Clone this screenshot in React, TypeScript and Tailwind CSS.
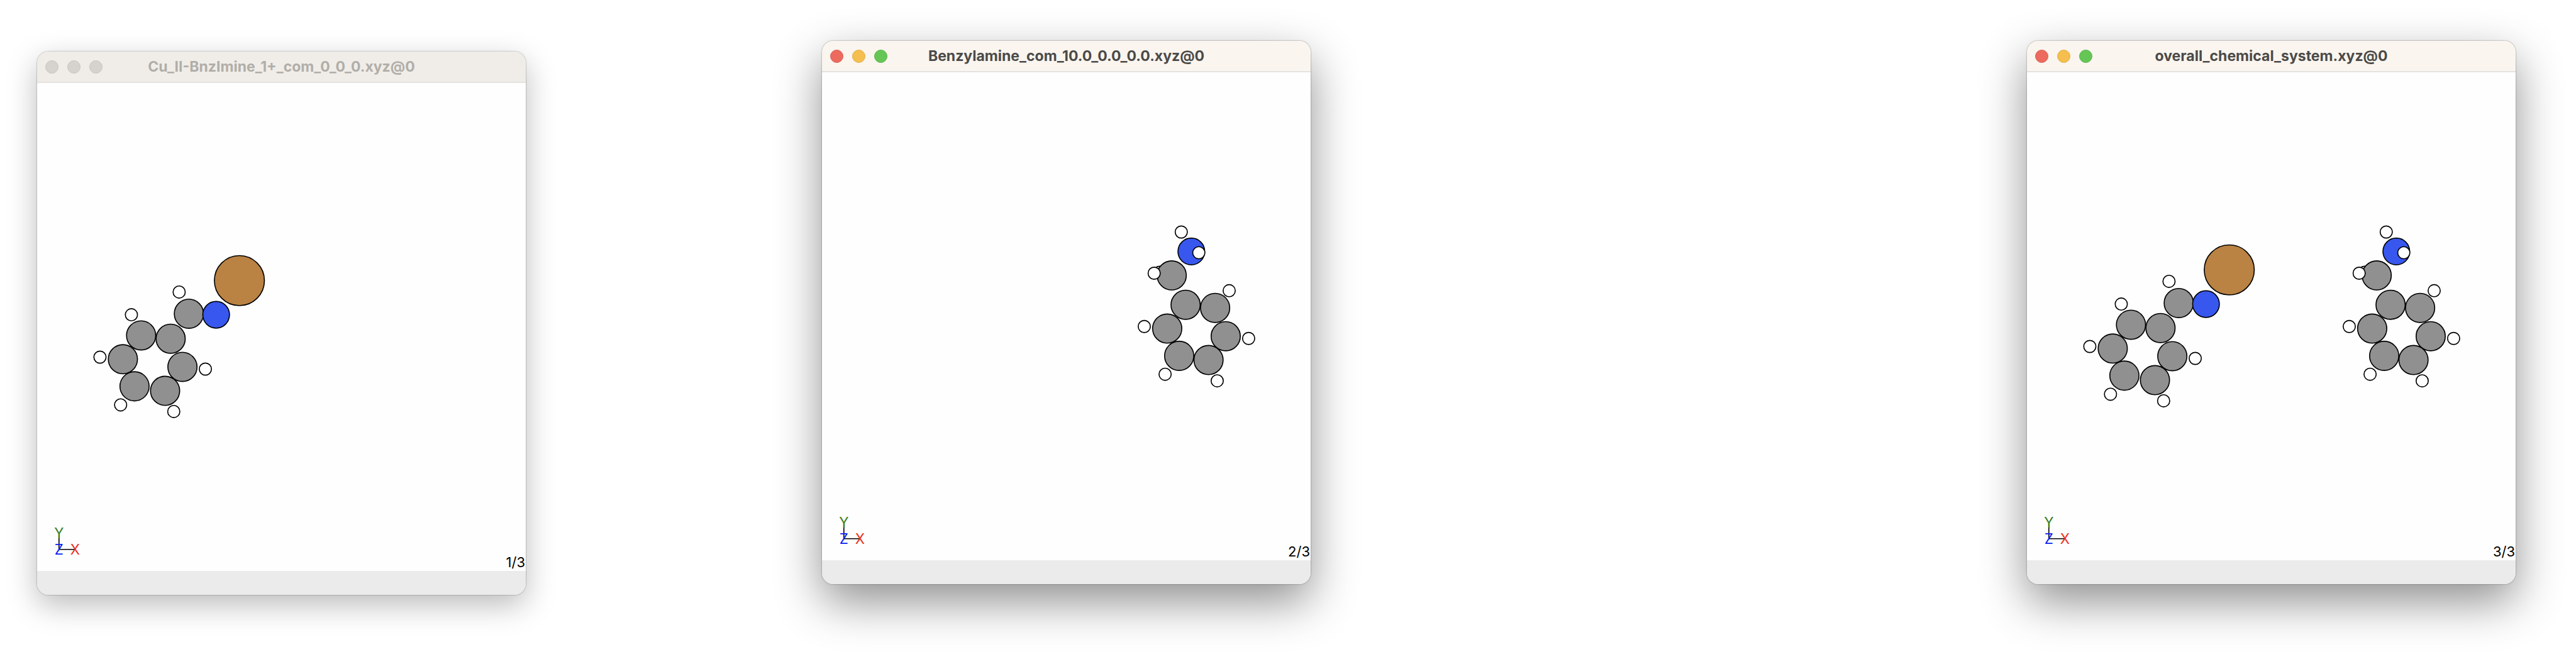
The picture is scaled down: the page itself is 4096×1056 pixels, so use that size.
import React from "react";

type Element = "H" | "C" | "N" | "Cu";
type Atom = [Element, number, number];

const ELEMENTS: Record<Element, { r: number; fill: string }> = {
  H: { r: 35, fill: "#ffffff" },
  C: { r: 84, fill: "#909090" },
  N: { r: 77, fill: "#3757ee" },
  Cu: { r: 144, fill: "#ba8243" },
};

// Atoms are listed back to front.
const COPPER_IMINE: Atom[] = [
  ["Cu", 928, 235],
  ["C", 637, 426],
  ["N", 794, 432],
  ["H", 581, 301],
  ["C", 362, 551],
  ["H", 306, 432],
  ["C", 532, 570],
  ["C", 257, 688],
  ["H", 125, 676],
  ["C", 600, 732],
  ["H", 732, 745],
  ["C", 324, 844],
  ["H", 244, 951],
  ["C", 500, 870],
  ["H", 550, 989],
];

const BENZYLAMINE: Atom[] = [
  ["H", 350, 137],
  ["N", 408, 249],
  ["H", 451, 256],
  ["H", 225, 369],
  ["C", 295, 387],
  ["H", 194, 374],
  ["C", 375, 556],
  ["H", 626, 475],
  ["C", 545, 574],
  ["C", 269, 693],
  ["H", 137, 681],
  ["C", 606, 737],
  ["H", 738, 750],
  ["C", 338, 850],
  ["H", 257, 956],
  ["C", 507, 874],
  ["H", 557, 994],
];

function Molecule({ atoms, x, y }: { atoms: Atom[]; x: number; y: number }) {
  return (
    <g transform={`translate(${x} ${y}) scale(0.33333)`} stroke="#000" strokeWidth="6">
      {atoms.map(([el, cx, cy], i) => (
        <circle key={i} cx={cx} cy={cy} r={ELEMENTS[el].r} fill={ELEMENTS[el].fill} />
      ))}
    </g>
  );
}

function Axes() {
  return (
    <g className="font-['Inter',sans-serif]" fontSize="27" textAnchor="middle">
      <path d="M42 866V895.5H73" fill="none" stroke="#000" strokeWidth="2" />
      <text x="42" y="874" fill="#3a7d22">Y</text>
      <text x="42" y="905" fill="#0a1df5">Z</text>
      <text x="73" y="905" fill="#ea3323">X</text>
    </g>
  );
}

function Light({ label, color }: { label: string; color: string }) {
  return <button type="button" aria-label={label} className={`size-[21px] rounded-full border ${color}`} />;
}

interface ViewerProps {
  title: string;
  counter: string;
  active?: boolean;
  className: string;
  children: React.ReactNode;
}

function Viewer({ title, counter, active = false, className, children }: ViewerProps) {
  const shadow = active
    ? "shadow-[0_0_2px_rgba(0,0,0,0.55),0_28px_72px_rgba(0,0,0,0.44)]"
    : "shadow-[0_0_2px_rgba(0,0,0,0.5),0_16px_48px_rgba(0,0,0,0.27)]";
  const bar = active ? "bg-[#faf5ef] text-[#4b4a48]" : "bg-[#f0ede8] text-[#b1aea9]";
  return (
    <section aria-label={title} className={`rounded-[18px] ${shadow} ${className}`}>
      <div className="overflow-hidden rounded-[18px]">
        <header
          className={`grid h-[50px] grid-cols-[1fr_auto_1fr] items-center border-b-2 border-[#e4e3df] px-[13px] ${bar}`}
        >
          <div className="flex gap-[14px]">
            <Light label="Close" color={active ? "border-[#dd5f54] bg-[#ec6a5e]" : "border-[#c6c3be] bg-[#d6d3ce]"} />
            <Light label="Minimize" color={active ? "border-[#e2ae45] bg-[#f4bf4f]" : "border-[#c6c3be] bg-[#d6d3ce]"} />
            <Light label="Zoom" color={active ? "border-[#58b34b] bg-[#65c655]" : "border-[#c6c3be] bg-[#d6d3ce]"} />
          </div>
          <h2 className="text-[23px] leading-none font-bold">{title}</h2>
        </header>
        <div className="relative bg-[#fefefe]">
          <svg viewBox="0 0 938 937" className="block w-full" role="img" aria-label={`Structure in ${title}`}>
            {children}
            <Axes />
          </svg>
          <span className="absolute right-px bottom-0 text-[22px] leading-7 text-black">{counter}</span>
        </div>
        <footer className="h-[38px] bg-[#ebebeb]" />
      </div>
    </section>
  );
}

export default function App() {
  return (
    <main className="grid min-h-screen grid-cols-[59fr_777fr_471fr_777fr_1139fr_777fr_96fr] items-start overflow-hidden bg-white pt-[65px] font-['Inter',sans-serif]">
      <Viewer title="Cu_II-BnzImine_1+_com_0_0_0.xyz@0" counter="1/3" className="col-start-2 mt-[17px]">
        <Molecule atoms={COPPER_IMINE} x={79} y={301} />
      </Viewer>
      <Viewer title="Benzylamine_com_10.0_0.0_0.0.xyz@0" counter="2/3" active className="col-start-4">
        <Molecule atoms={BENZYLAMINE} x={573} y={261} />
      </Viewer>
      <Viewer title="overall_chemical_system.xyz@0" counter="3/3" active className="col-start-6">
        <Molecule atoms={COPPER_IMINE} x={79} y={301} />
        <Molecule atoms={BENZYLAMINE} x={573} y={261} />
      </Viewer>
    </main>
  );
}
